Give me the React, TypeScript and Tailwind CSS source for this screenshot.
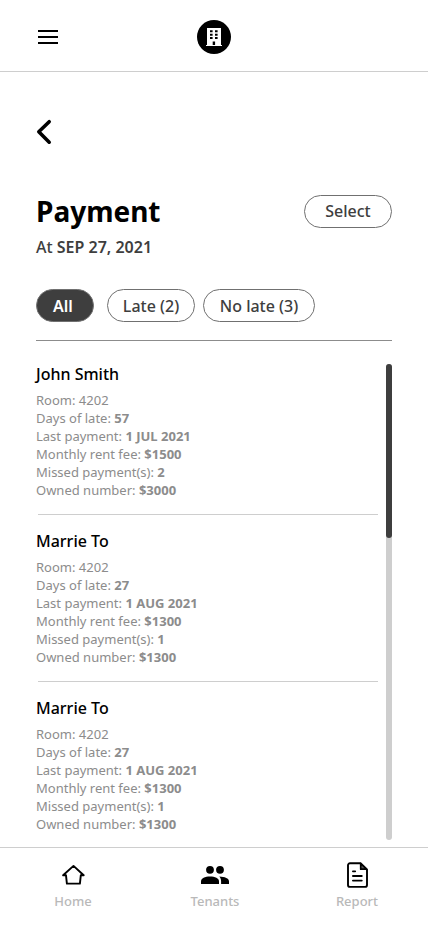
import React from "react";

type Tenant = {
  id: number;
  name: string;
  details: { label: string; value: string; strong: boolean }[];
};

function makeTenant(
  id: number,
  name: string,
  late: string,
  last: string,
  rent: string,
  missed: string,
  owned: string,
): Tenant {
  return {
    id,
    name,
    details: [
      { label: "Room", value: "4202", strong: false },
      { label: "Days of late", value: late, strong: true },
      { label: "Last payment", value: last, strong: true },
      { label: "Monthly rent fee", value: rent, strong: true },
      { label: "Missed payment(s)", value: missed, strong: true },
      { label: "Owned number", value: owned, strong: true },
    ],
  };
}

const tenants: Tenant[] = [
  makeTenant(1, "John Smith", "57", "1 JUL 2021", "$1500", "2", "$3000"),
  makeTenant(2, "Marrie To", "27", "1 AUG 2021", "$1300", "1", "$1300"),
  makeTenant(3, "Marrie To", "27", "1 AUG 2021", "$1300", "1", "$1300"),
];

function MenuIcon() {
  return (
    <svg width="20" height="14" viewBox="0 0 20 14" aria-hidden="true">
      <path d="M0 0h20v2H0zM0 6h20v2H0zM0 12h20v2H0z" fill="#000" />
    </svg>
  );
}

function Logo() {
  return (
    <svg width="34" height="34" viewBox="0 0 34 34" aria-hidden="true">
      <circle cx="17" cy="17" r="17" fill="#000" />
      <path
        fill="#fff"
        fillRule="evenodd"
        d="M10 8h14v17h1v1H9v-1h1zM13 10.3v2h2.6v-2zM18 10.3v2h2.6v-2zM13 13.7v2h2.6v-2zM18 13.7v2h2.6v-2zM13 17.1v2h2.6v-2zM18 17.1v2h2.6v-2zM15.7 21.5v3.5h2.4v-3.5z"
      />
    </svg>
  );
}

function BackIcon() {
  return (
    <svg width="16" height="26" viewBox="0 0 16 26" fill="none" aria-hidden="true">
      <path
        d="M13.2 2.7 2.8 12.8l10.4 10.4"
        stroke="#000"
        strokeWidth="3.6"
        strokeLinecap="round"
        strokeLinejoin="round"
      />
    </svg>
  );
}

function HomeIcon() {
  return (
    <svg width="26" height="26" viewBox="0 0 26 26" fill="none" aria-hidden="true">
      <path
        d="M13.500 3.900 3.100 13.300h2.900l.9 8.300h13l.9-8.300h2.900z"
        stroke="#000"
        strokeWidth="1.900"
        strokeLinejoin="round"
      />
    </svg>
  );
}

function TenantsIcon() {
  return (
    <svg width="28" height="26" viewBox="0 0 28 26" fill="#000" aria-hidden="true">
      <circle cx="9" cy="7.8" r="3.9" />
      <circle cx="19" cy="7.8" r="3.9" />
      <path d="M0 22v-2.600C0 16.200 4 14.400 9 14.400s9 1.800 9 5V22z" />
      <path d="M18.300 14.600c5.600.2 9.700 1.900 9.700 4.800V22h-7.900v-2.600c0-2-.6-3.500-1.800-4.800z" />
    </svg>
  );
}

function ReportIcon() {
  return (
    <svg width="22" height="26" viewBox="0 0 22 26" fill="none" aria-hidden="true">
      <path
        d="M14.500 1.300H4a2 2 0 0 0-2 2v19.600a2 2 0 0 0 2 2h15a2 2 0 0 0 2-2V7.600z"
        stroke="#000"
        strokeWidth="1.900"
        strokeLinejoin="round"
      />
      <path
        d="M14.700 1.500v5.700H20.600z"
        fill="#555"
        stroke="#000"
        strokeWidth="1.700"
        strokeLinejoin="round"
      />
      <path
        d="M6.900 9.300h2.300M6.900 14h8.900M6.900 18.600h8.900"
        stroke="#000"
        strokeWidth="1.800"
        strokeLinecap="round"
      />
    </svg>
  );
}

function Pill({
  children,
  className,
  pressed,
}: {
  children: React.ReactNode;
  className: string;
  pressed?: boolean;
}) {
  return (
    <button
      type="button"
      aria-pressed={pressed}
      className={`h-[33px] shrink-0 rounded-full border border-[#707070] text-base leading-6 ${className}`}
    >
      {children}
    </button>
  );
}

function TenantRow({ tenant }: { tenant: Tenant }) {
  return (
    <li className="group">
      <h2 className="text-base font-medium leading-6 text-black">{tenant.name}</h2>
      <dl className="mt-[5px] text-[13px] leading-[18px] text-[#8c8c8c]">
        {tenant.details.map((d) => (
          <div key={d.label}>
            <dt className="inline">{d.label}: </dt>
            <dd className={d.strong ? "inline font-bold" : "inline"}>{d.value}</dd>
          </div>
        ))}
      </dl>
      <hr className="mt-[15px] mb-3.5 ml-0.5 border-t border-[#cecece] group-last:hidden" />
    </li>
  );
}

function NavItem({ icon, label }: { icon: React.ReactNode; label: string }) {
  return (
    <a href="#" className="flex w-[72px] flex-col items-center gap-1 text-[#b9b9b9]">
      {icon}
      <span className="text-[13px] font-medium leading-[18px]">{label}</span>
    </a>
  );
}

export default function App() {
  return (
    <div
      className="flex min-h-screen flex-col bg-white text-[#3e3e3e]"
      style={{ fontFamily: '"Noto Sans", sans-serif' }}
    >
      <header className="grid h-[72px] grid-cols-3 items-center border-b border-[#cecece] px-9 pt-0.5">
        <button type="button" aria-label="Menu" className="justify-self-start px-0.5 py-2">
          <MenuIcon />
        </button>
        <a href="#" aria-label="Dashboard" className="justify-self-center">
          <Logo />
        </a>
      </header>

      <main className="flex grow flex-col px-9 pb-[7px] pt-[47px]">
        <button type="button" aria-label="Back" className="self-start">
          <BackIcon />
        </button>

        <div className="mt-12 flex items-center justify-between">
          <h1 className="text-[28px] font-bold leading-9 text-black">Payment</h1>
          <Pill className="w-[88px] font-medium">Select</Pill>
        </div>
        <p className="mt-1.5 text-base font-medium leading-6">
          At <span className="font-semibold">SEP 27, 2021</span>
        </p>

        <div className="mt-[30px] flex border-b border-[#8c8c8c] pb-[18px]">
          <Pill pressed className="w-[58px] bg-[#3e3e3e] pr-1 font-semibold text-white">
            All
          </Pill>
          <Pill className="ml-[13px] w-[88px] font-medium">Late (2)</Pill>
          <Pill className="ml-2 w-[112px] font-medium">No late (3)</Pill>
        </div>

        <div className="mt-[23px] flex grow gap-2">
          <ul className="-mt-0.5 grow">
            {tenants.map((t) => (
              <TenantRow key={t.id} tenant={t} />
            ))}
          </ul>
          <div className="w-1.5 shrink-0 rounded-full bg-[#cecece]">
            <div className="h-[174px] rounded-full bg-[#3e3e3e]" />
          </div>
        </div>
      </main>

      <nav className="flex h-[79px] justify-between border-t border-[#cecece] pt-3.5 pr-[35px] pl-[37px]">
        <NavItem icon={<HomeIcon />} label="Home" />
        <NavItem icon={<TenantsIcon />} label="Tenants" />
        <NavItem icon={<ReportIcon />} label="Report" />
      </nav>
    </div>
  );
}
